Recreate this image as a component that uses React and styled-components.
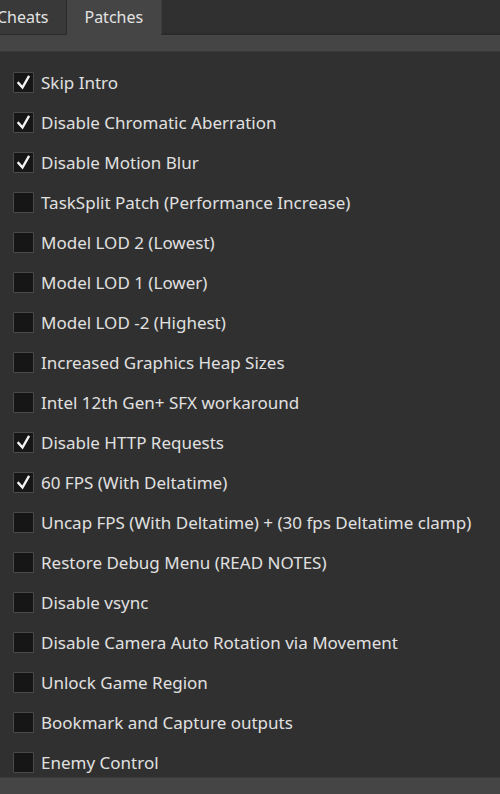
import React from "react";
import styled, { createGlobalStyle } from "styled-components";

const Global = createGlobalStyle`
  html, body { margin: 0; padding: 0; background: #303030; overflow: hidden; }
  body { font-family: "Noto Sans", "Open Sans", sans-serif; }
`;

const Page = styled.div`
  width: 500px;
  height: 794px;
  display: flex;
  flex-direction: column;
  background: #303030;
  overflow: hidden;
`;

const Header = styled.div`
  height: 51px;
  flex: none;
  display: flex;
  align-items: flex-start;
  background: #454545;
  border-bottom: 1px solid #383838;
  margin-left: -21px;
`;

const Tab = styled.div`
  box-sizing: border-box;
  height: ${(p) => (p.$active ? "51px" : "35px")};
  padding: 6px ${(p) => (p.$active ? "17px" : "18px")} 0 ${(p) => (p.$active ? "17px" : "18px")};
  display: flex;
  align-items: flex-start;
  font-size: 16px;
  color: #e2e2e2;
  background: ${(p) => (p.$active ? "#454545" : "#393939")};
  border-right: 1px solid ${(p) => (p.$active ? "#454545" : "#2a2a2a")};
  border-bottom: ${(p) => (p.$active ? "none" : "1px solid #2a2a2a")};
`;

const Filler = styled.div`
  flex: 1;
  height: 35px;
  box-sizing: border-box;
  background: #303030;
  border-left: 1px solid #3d3d3d;
  border-bottom: 2px solid #2a2a2a;
`;

const List = styled.div`
  flex: 1;
  overflow: hidden;
  padding-top: 10px;
  display: flex;
  flex-direction: column;
`;

const Row = styled.label`
  height: 40px;
  flex: none;
  display: flex;
  align-items: center;
  padding-left: 13px;
  gap: 7px;
`;

const Box = styled.span`
  box-sizing: border-box;
  width: 21px;
  height: 21px;
  flex: none;
  background: #161616;
  border: 1px solid #4a4a4a;
  border-radius: 1px;
  display: flex;
  align-items: center;
  justify-content: center;
`;

const Label = styled.span`
  font-size: 17px;
  color: #e0e0e0;
  margin-top: 1px;
  white-space: nowrap;
`;

const Footer = styled.div`
  height: 16px;
  flex: none;
  background: #454545;
  border-top: 1px solid #3a3a3a;
`;

const Check = () => (
  <svg width="17" height="17" viewBox="0 0 17 17">
    <path d="M3.5 9 L7.5 13.5 L13.5 3" fill="none" stroke="#f4f4f4" strokeWidth="2.4" strokeLinecap="square" />
  </svg>
);

const items = [
  ["Skip Intro", true],
  ["Disable Chromatic Aberration", true],
  ["Disable Motion Blur", true],
  ["TaskSplit Patch (Performance Increase)", false],
  ["Model LOD 2 (Lowest)", false],
  ["Model LOD 1 (Lower)", false],
  ["Model LOD -2 (Highest)", false],
  ["Increased Graphics Heap Sizes", false],
  ["Intel 12th Gen+ SFX workaround", false],
  ["Disable HTTP Requests", true],
  ["60 FPS (With Deltatime)", true],
  ["Uncap FPS (With Deltatime) + (30 fps Deltatime clamp)", false],
  ["Restore Debug Menu (READ NOTES)", false],
  ["Disable vsync", false],
  ["Disable Camera Auto Rotation via Movement", false],
  ["Unlock Game Region", false],
  ["Bookmark and Capture outputs", false],
  ["Enemy Control", false],
];

export default function App() {
  return (
    <Page>
      <Global />
      <Header>
        <Tab>Cheats</Tab>
        <Tab $active>Patches</Tab>
        <Filler />
      </Header>
      <List>
        {items.map(([t, c]) => (
          <Row key={t}>
            <Box>{c && <Check />}</Box>
            <Label>{t}</Label>
          </Row>
        ))}
      </List>
      <Footer />
    </Page>
  );
}
